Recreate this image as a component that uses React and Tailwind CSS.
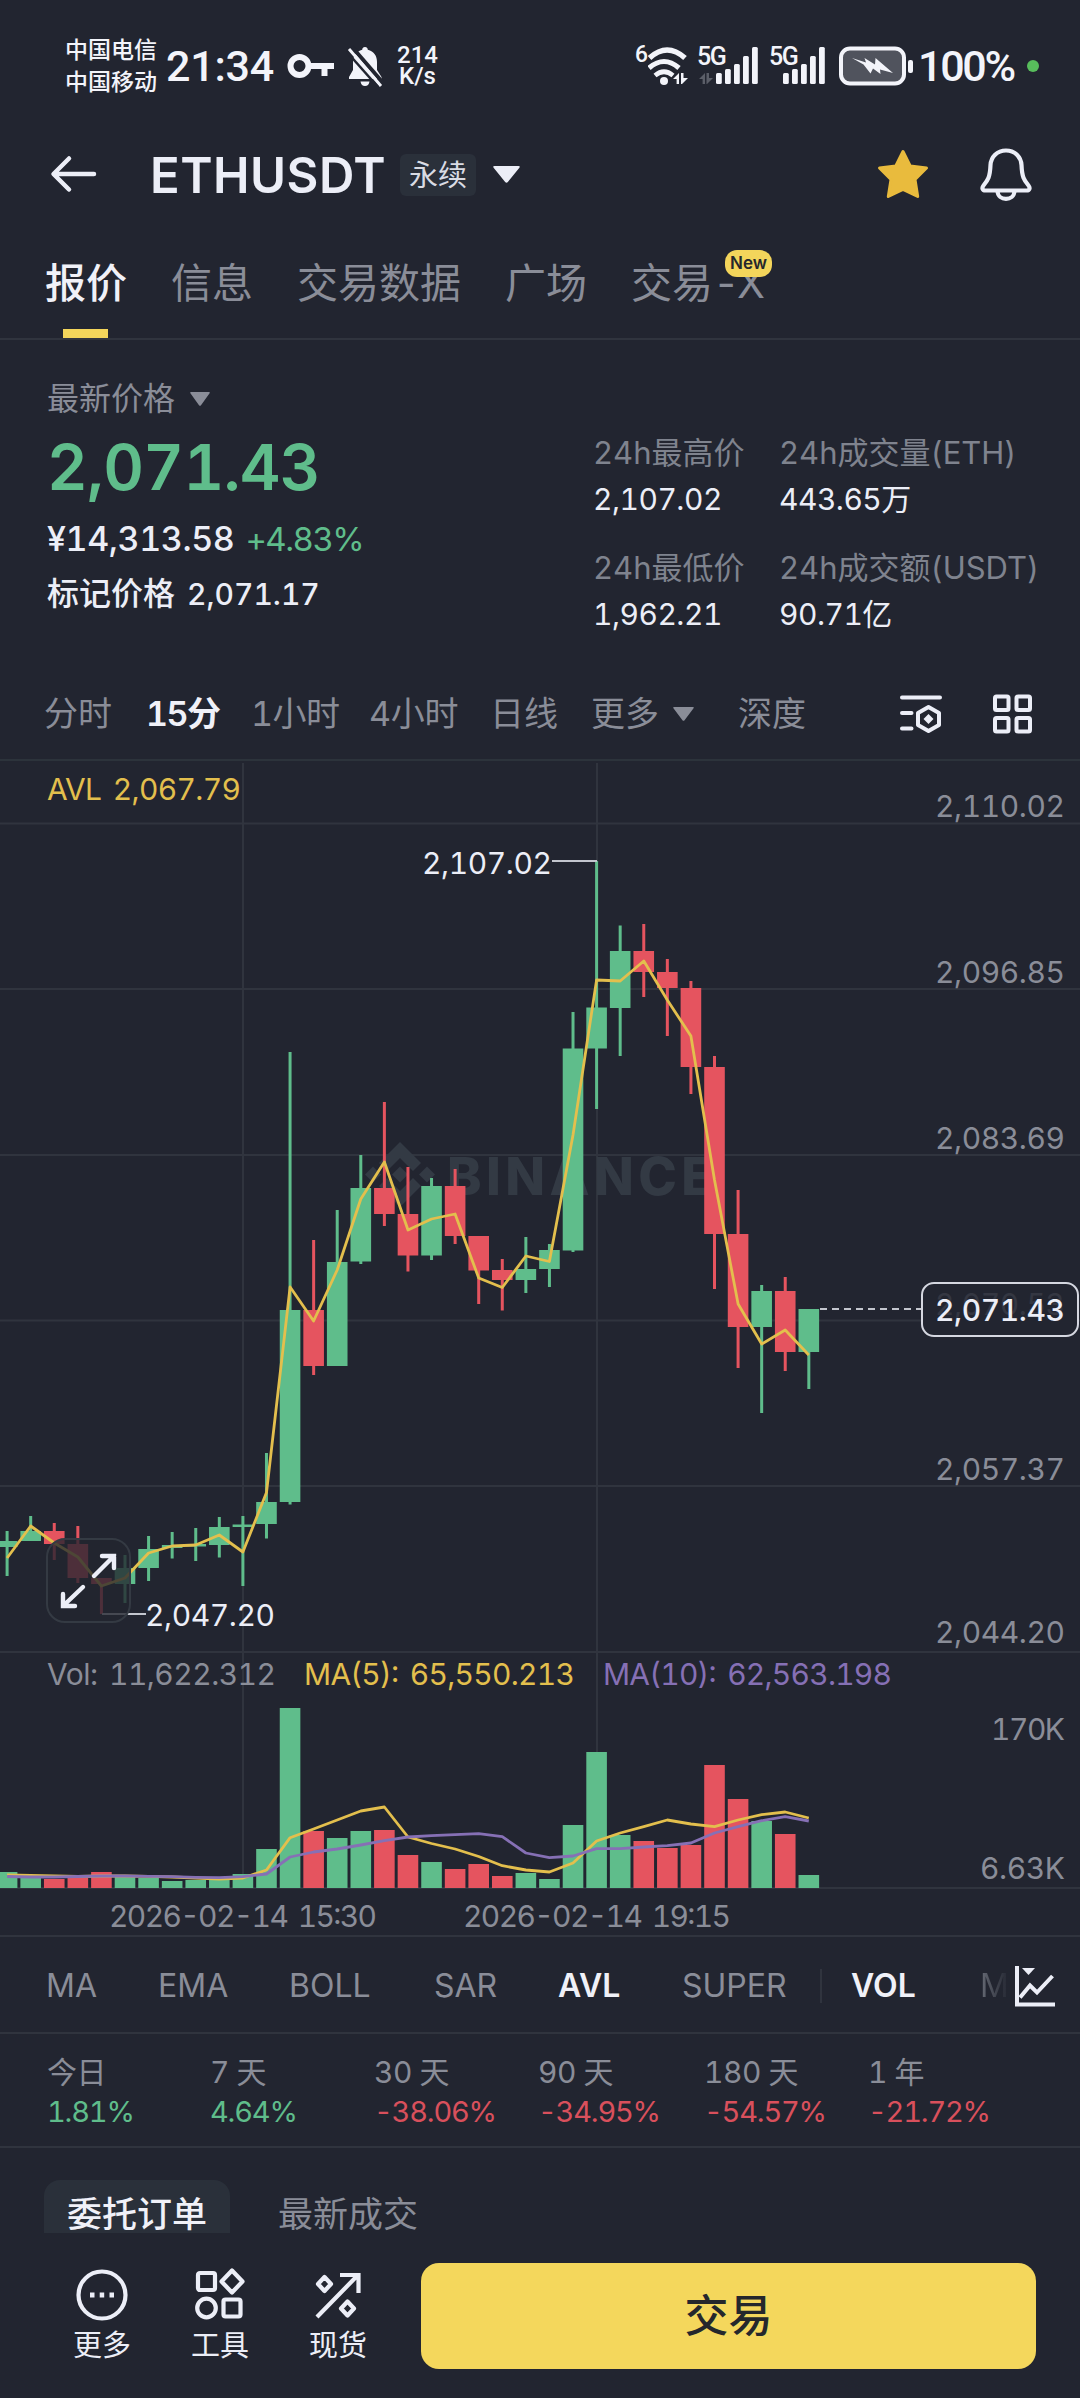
import clsx from "clsx";

const GREEN = "#5fbd8b";
const RED = "#e5545f";
const YELLOW = "#e3bf4d";
const PURPLE = "#8670b5";
const GRAY = "#8a8d98";
const LIGHT = "#eceef7";

// [direction, high, bodyTop, bodyBottom, low, volumeTop, avl, ma5, ma10]
const candles = [
  ["up", 1531, 1541, 1547, 1576, 1872, 1558, 1875, 1876.5],
  ["up", 1516, 1531, 1541, 1541, 1877, 1526, 1875.5, 1877],
  ["down", 1523, 1531, 1544, 1560, 1879, 1543, 1876, 1877],
  ["down", 1526, 1544, 1578, 1583, 1878, 1557, 1876.5, 1876.5],
  ["down", 1578, 1578, 1584, 1614, 1872, 1586, 1876, 1876],
  ["up", 1555, 1568, 1584, 1603, 1877, 1578, 1876, 1876],
  ["up", 1536, 1549, 1568, 1581, 1878, 1553, 1876.3, 1876.3],
  ["up", 1532, 1545, 1548, 1558.5, 1881, 1546, 1877, 1876.7],
  ["up", 1528, 1544, 1546.5, 1561, 1880, 1545, 1878, 1877.3],
  ["up", 1517, 1527, 1545, 1557.5, 1880, 1535, 1879, 1877.7],
  ["up", 1516, 1524.5, 1527, 1586, 1874, 1552, 1878, 1876.7],
  ["up", 1453, 1502, 1524, 1538.5, 1849, 1492.5, 1870, 1874],
  ["up", 1052, 1310, 1502, 1504.5, 1708, 1287, 1837.7, 1857],
  ["down", 1240, 1310, 1366, 1375, 1831, 1321, 1829, 1852],
  ["up", 1210, 1262, 1366, 1366, 1838, 1270, 1820, 1849],
  ["up", 1155, 1188, 1261.5, 1264, 1831, 1199, 1811, 1845],
  ["down", 1102, 1188, 1214, 1226, 1830, 1162, 1807, 1840.7],
  ["down", 1167, 1214, 1255.5, 1271.5, 1855, 1230, 1837, 1837],
  ["up", 1178, 1186, 1255.5, 1260, 1862, 1219, 1843.5, 1835.7],
  ["down", 1169, 1186, 1236, 1244, 1869, 1214, 1849, 1834.7],
  ["down", 1236, 1236, 1270.5, 1304, 1864, 1278, 1856.5, 1833.7],
  ["down", 1259, 1270, 1280, 1310.5, 1876, 1287.5, 1865.7, 1836.7],
  ["up", 1237, 1269, 1280, 1293, 1873, 1256, 1870, 1853],
  ["up", 1244, 1250, 1269, 1287, 1879, 1261.5, 1872, 1857.7],
  ["up", 1012, 1048.5, 1250.5, 1252, 1825, 1135, 1863, 1856],
  ["up", 861, 1007.5, 1048.5, 1109, 1752, 980, 1841, 1848.7],
  ["up", 925.5, 951, 1008, 1056, 1835, 981, 1833, 1848.7],
  ["down", 924, 951, 972, 997, 1841, 961, 1826.7, 1847],
  ["down", 959, 972, 988, 1036, 1848, 1000, 1820, 1845.7],
  ["down", 981, 988, 1067, 1094, 1845, 1036, 1824, 1843],
  ["down", 1056, 1067, 1234, 1289, 1765, 1180, 1826.7, 1833],
  ["down", 1190, 1234, 1327, 1368, 1799, 1304, 1820, 1826.7],
  ["up", 1285, 1291, 1327, 1413, 1821, 1344, 1814.7, 1820.7],
  ["down", 1277, 1291, 1352, 1371, 1834, 1330, 1812, 1816.7],
  ["up", 1309, 1309, 1352, 1389, 1875, 1355, 1818, 1821],
];

const cx = (i) => 7.1 + i * 23.58;
const line = (col) => candles.map((c, i) => `${cx(i).toFixed(1)},${c[col]}`).join(" ");

const tabs = ["报价", "信息", "交易数据", "广场"];

const performance = [
  ["今日", "1.81%"],
  ["7 天", "4.64%"],
  ["30 天", "-38.06%"],
  ["90 天", "-34.95%"],
  ["180 天", "-54.57%"],
  ["1 年", "-21.72%"],
];

function Caret({ className }) {
  return (
    <svg viewBox="0 0 20 13" preserveAspectRatio="none" className={className} fill="currentColor">
      <path d="M1.2 0H18.8Q20.6 0 19.4 1.5L11 12.2Q10 13.4 9 12.2L0.6 1.5Q-0.6 0 1.2 0Z" />
    </svg>
  );
}

function Signal({ arrows }) {
  return (
    <svg width="59" height="40" viewBox="0 0 59 40" fill="#f3f4fa">
      {arrows && (
        <g fill="#5b5e68">
          <path d="M0 33L6 27V38H3.6V33Z" />
          <path d="M7.5 27H10V32H14L8 38H7.5Z" />
        </g>
      )}
      <rect x="17" y="27" width="5.8" height="11" rx="1.5" />
      <rect x="26" y="23" width="5.8" height="15" rx="1.5" />
      <rect x="35" y="18" width="5.8" height="20" rx="1.5" />
      <rect x="44" y="10" width="5.8" height="28" rx="1.5" />
      <rect x="53" y="1" width="5.8" height="37" rx="1.5" />
    </svg>
  );
}

function StatusBar() {
  return (
    <div className="flex h-[132px] items-center pr-[41px] pl-[65px] font-['Roboto','Noto_Sans_CJK_SC',sans-serif] font-medium text-[#f3f4fa]">
      <div className="flex w-[101px] flex-col gap-[9px] text-[23px] leading-[23px]">
        <span>中国电信</span>
        <span>中国移动</span>
      </div>
      <span className="w-[121px] text-[43px] leading-none tracking-[-0.2px]">21:34</span>
      <svg width="48" height="30" viewBox="0 0 48 30" fill="none" stroke="#f3f4fa" strokeWidth="6">
        <circle cx="12.5" cy="15" r="9" />
        <path d="M21 15H47M37.5 15V25" />
      </svg>
      <svg className="ml-[11px]" width="38" height="42" viewBox="0 0 38 42">
        <path
          d="M19 2C20.8 2 21.6 3 21.8 4.8C28 6.3 31 11 31 17V25L35.5 32V34H3V32L7 25V17C7 11 10.5 6.3 16.2 4.8C16.4 3 17.2 2 19 2ZM14.5 36.5H23.5C23 39.5 21.5 41 19 41S15 39.5 14.5 36.5Z"
          fill="#f3f4fa"
        />
        <path d="M6 2L38 39" stroke="#222530" strokeWidth="4" />
        <path d="M3 4L35 41" stroke="#f3f4fa" strokeWidth="3" />
        <path d="M0.5 6.5L32 42" stroke="#222530" strokeWidth="2.5" />
      </svg>
      <div className="ml-[13px] flex flex-col items-center text-[24px] leading-[21px]">
        <span>214</span>
        <span>K/s</span>
      </div>
      <div className="ml-auto flex items-center">
        <span className="mb-[23px] text-[23px] leading-none">6</span>
        <svg width="44" height="40" viewBox="0 0 44 40" fill="none" stroke="#f3f4fa" strokeWidth="4.6">
          <path d="M1.5 12Q19 -4 37 12" strokeWidth="5.4" />
          <path d="M1 22Q16 9 31 22" strokeWidth="5" />
          <path d="M7 29.5Q16 22 25 29.5" />
          <circle cx="16" cy="35" r="4" fill="#f3f4fa" stroke="none" />
          <g fill="#f3f4fa" stroke="none">
            <path d="M25 33L31 27V38H28.6V33Z" />
            <path d="M33 27H35.5V32H40L34 38H33Z" />
          </g>
        </svg>
        <div className="relative ml-[7px]">
          <span className="absolute top-0 left-[-2px] text-[25px] leading-[22px] tracking-[-1.5px]">5G</span>
          <Signal arrows />
        </div>
        <div className="relative ml-[8px]">
          <span className="absolute top-0 left-[3px] text-[25px] leading-[22px] tracking-[-1.5px]">5G</span>
          <Signal />
        </div>
        <svg className="ml-[14px]" width="76" height="40" viewBox="0 0 76 40">
          <rect x="2" y="2.5" width="63" height="35" rx="9" fill="#50535d" stroke="#f3f4fa" strokeWidth="4" />
          <rect x="69" y="14" width="5" height="13" rx="2" fill="#f3f4fa" />
          <path d="M13 12L27 16.5L25.5 12L36 18.5L36.5 12L54 27L41 23.5L41.5 28L34 22.5L31.5 27.5L24.5 18.5Z" fill="#f3f4fa" />
        </svg>
        <span className="ml-[3px] w-[109px] text-[43px] leading-none tracking-[-2.3px]">100%</span>
        <span className="size-[12px] rounded-full bg-[#58bd5c]" />
      </div>
    </div>
  );
}

function Header() {
  return (
    <div className="flex h-[84px] items-center pr-[48px] pl-[48px] text-[#eceef7]">
      <svg width="50" height="40" viewBox="0 0 50 40" fill="none" stroke="currentColor" strokeWidth="4.5" strokeLinecap="round" strokeLinejoin="round">
        <path d="M46 20H6M21 4.5L5.5 20L21 35.5" />
      </svg>
      <h1 className="ml-[52px] w-[250px] pt-[2px] text-[49px] leading-none font-semibold tracking-[0.5px]">ETHUSDT</h1>
      <span className="mt-[1px] rounded-md bg-[#2a303a] px-[9px] pt-[7px] pb-[5px] text-[29px] leading-[30px] text-[#d9dbe4]">永续</span>
      <Caret className="ml-[17px] h-[17px] w-[27px]" />
      <svg className="ml-auto" width="52" height="50" viewBox="0 0 52 50" fill="#e9bb3d" stroke="#e9bb3d" strokeWidth="3" strokeLinejoin="round">
        <path d="M26 2.5L33.2 17L49.5 19L38 30.5L40.7 47.5L26 40.5L11.3 47.5L14 30.5L2.5 19L18.800 17Z" />
      </svg>
      <svg className="ml-[51px]" width="52" height="54" viewBox="0 0 52 54" fill="none" stroke="currentColor" strokeWidth="4.2" strokeLinejoin="round">
        <path d="M26 3.5C35 3.5 41 10 41.5 18C42 30 44 33 48.5 38.5C50.5 41 49.5 43.5 46.5 43.5H5.5C2.5 43.5 1.5 41 3.5 38.5C8 33 10 30 10.5 18C11 10 17 3.5 26 3.5Z" />
        <path d="M17.500 44C18 54.500 34 54.500 34.500 44" />
      </svg>
    </div>
  );
}

function Tabs() {
  return (
    <nav className="flex h-[124px] gap-[44px] border-b-2 border-[#30343e] pl-[45px] text-[41px] leading-none text-[#8a8d98]">
      {tabs.map((t, i) => (
        <div key={t} className={clsx("relative flex items-center pt-[12px]", i === 0 && "font-medium text-[#f0f1f8]")}>
          {t}
          {i === 0 && <span className="absolute bottom-0 left-[18px] h-[9px] w-[45px] bg-[#f3d55b]" />}
        </div>
      ))}
      <div className="relative flex items-center pt-[12px]">
        交易<span className="tracking-[-2.5px]">-X</span>
        <span className="absolute top-[34px] left-[94px] flex h-[27px] w-[47px] items-center justify-center rounded-[12px] bg-[#f3d55b] text-[17px] font-semibold text-[#25272c]">
          New
        </span>
      </div>
    </nav>
  );
}

function Stat({ label, value }) {
  return (
    <div className="text-[31px] leading-none whitespace-nowrap">
      <div className="flex h-[44px] items-center text-[#7f838e]">{label}</div>
      <div className="flex h-[50px] items-center text-[30px] tracking-[-0.5px]">{value}</div>
    </div>
  );
}

function Quote() {
  return (
    <section className="flex h-[328px] justify-between pl-[47px] leading-none text-[#eceef7]">
      <div className="pt-[41px]">
        <div className="flex h-[36px] items-center text-[32px] text-[#8a8d98]">
          最新价格
          <Caret className="ml-[15px] h-[14px] w-[20px]" />
        </div>
        <div className="flex h-[100px] items-center text-[63px] font-semibold tracking-[-0.7px] text-[#5fbd8b]">2,071.43</div>
        <div className="flex h-[44px] items-center gap-[11px] text-[34px]">
          <span className="font-medium tracking-[-0.4px]">¥14,313.58</span>
          <span className="text-[33px] tracking-[-1.5px] text-[#5fbd8b]">+4.83%</span>
        </div>
        <div className="flex h-[66px] items-center gap-[12px] text-[32px] font-medium">
          标记价格
          <span className="text-[30px]">2,071.17</span>
        </div>
      </div>
      <div className="grid w-[487px] grid-cols-[186px_1fr] content-start gap-y-[21px] pt-[90px]">
        <Stat label="24h最高价" value="2,107.02" />
        <Stat label="24h成交量(ETH)" value="443.65万" />
        <Stat label="24h最低价" value="1,962.21" />
        <Stat label="24h成交额(USDT)" value="90.71亿" />
      </div>
    </section>
  );
}

function Timeframes() {
  return (
    <div className="flex h-[93px] items-center border-b-2 border-[#2c333b] pt-[1px] pr-[47px] pl-[44px] text-[34px] leading-none text-[#8a8d98]">
      <span className="w-[102px]">分时</span>
      <span className="w-[105px] font-semibold tracking-[-1.5px] text-[#f0f1f8]">15分</span>
      <span className="w-[118px] tracking-[-0.5px]">1小时</span>
      <span className="w-[121px] tracking-[-0.3px]">4小时</span>
      <span className="w-[101px]">日线</span>
      <span>更多</span>
      <Caret className="ml-[14px] h-[14px] w-[21px]" />
      <span className="ml-[44px]">深度</span>
      <svg className="ml-auto" width="42" height="40" viewBox="0 0 42 40" fill="none" stroke="#eceef7" strokeWidth="4">
        <path d="M2 3.5H40M2 19H11.5M2 34.5H11.5" strokeLinecap="round" />
        <path d="M28.5 13L39 19V31L28.5 37L18 31V19Z" strokeLinejoin="round" />
        <path d="M28.5 20L33.5 25L28.5 30L23.5 25Z" fill="#eceef7" stroke="none" />
      </svg>
      <svg className="ml-[50px]" width="41" height="40" viewBox="0 0 41 40" fill="none" stroke="#eceef7" strokeWidth="4">
        <rect x="3" y="2.5" width="13.5" height="13.5" rx="1.5" />
        <rect x="24.5" y="2.5" width="13.5" height="13.5" rx="1.5" />
        <rect x="3" y="24" width="13.5" height="13.5" rx="1.5" />
        <rect x="24.5" y="24" width="13.5" height="13.5" rx="1.5" />
      </svg>
    </div>
  );
}

function Label({ x, y, w, color, children, weight }) {
  return (
    <text x={x} y={y + 11} textLength={w} fill={color} fontSize="30" fontWeight={weight} wordSpacing="4">
      {children}
    </text>
  );
}

function Chart() {
  return (
    <svg className="block h-[1174px] w-[1080px]" viewBox="0 761 1080 1174">
      {/* grid */}
      <g stroke="#30343e" strokeWidth="2">
        {[823.5, 989, 1155, 1320.5, 1486, 1652, 1888].map((y) => (
          <path key={y} d={`M0 ${y}H1080`} />
        ))}
        <path d="M243 763V1888M597 763V1888" />
      </g>

      {/* watermark */}
      <g fill="#333a44">
        <path d="M400 1142L421 1163L413 1171L400 1158L387 1171L379 1163Z" />
        <path d="M400 1207L379 1186L387 1178L400 1191L413 1178L421 1186Z" />
        <path d="M400 1166.5L408 1174.5L400 1182.5L392 1174.5Z" />
        <path d="M373 1166.5L381 1174.5L373 1182.5L365 1174.5Z" />
        <path d="M427 1166.5L435 1174.5L427 1182.5L419 1174.5Z" />
        <text x="447" y="1195" fontSize="52" fontWeight="800" textLength="266">
          BINANCE
        </text>
      </g>

      {/* candles and volume */}
      {candles.map(([dir, high, top, bottom, low, vol], i) => {
        const color = dir === "up" ? GREEN : RED;
        return (
          <g key={i} fill={color}>
            <rect x={cx(i) - 1.5} y={high} width="3" height={low - high} />
            <rect x={cx(i) - 10.3} y={top} width="20.6" height={bottom - top} />
            <rect x={cx(i) - 10.3} y={vol} width="20.6" height={1888 - vol} />
          </g>
        );
      })}
      <g fill="none" strokeWidth="2.8" strokeLinejoin="round">
        <polyline points={line(6)} stroke={YELLOW} />
        <polyline points={line(7)} stroke={YELLOW} />
        <polyline points={line(8)} stroke={PURPLE} />
      </g>

      {/* high and low markers */}
      <path d="M552 861H597M102 1614H146" stroke="#c3c6ce" strokeWidth="2" />
      <Label x="422" y={863} w="130" color={LIGHT}>2,107.02</Label>
      <Label x="145" y={1615} w="130" color={LIGHT}>2,047.20</Label>

      {/* expand button */}
      <rect x="47" y="1539" width="83" height="83" rx="18" fill="#222530" fillOpacity="0.78" stroke="#343a43" strokeWidth="2" />
      <path
        d="M94 1576L114 1556M102 1556H114V1568M83 1587L63 1606M63 1594V1606H75"
        fill="none"
        stroke={LIGHT}
        strokeWidth="4.400"
        strokeLinecap="round"
      />

      {/* axis labels */}
      <Label x="47" y={789} w="194" color={YELLOW}>AVL 2,067.79</Label>
      <Label x="935" y={806} w="130" color={GRAY}>2,110.02</Label>
      <Label x="935" y={972} w="130" color={GRAY}>2,096.85</Label>
      <Label x="935" y={1138} w="130" color={GRAY}>2,083.69</Label>
      <Label x="935" y={1469} w="130" color={GRAY}>2,057.37</Label>
      <Label x="935" y={1632} w="130" color={GRAY}>2,044.20</Label>
      <Label x="991" y={1729} w="74" color={GRAY}>170K</Label>
      <Label x="980" y={1868} w="85" color={GRAY}>6.63K</Label>
      <Label x="47" y={1674} w="229" color={GRAY}>Vol: 11,622.312</Label>
      <Label x="304" y={1674} w="271" color={YELLOW}>MA(5): 65,550.213</Label>
      <Label x="603" y={1674} w="289" color={PURPLE}>MA(10): 62,563.198</Label>
      <Label x="109" y={1916} w="268" color={GRAY}>2026-02-14 15:30</Label>
      <Label x="463" y={1916} w="268" color={GRAY}>2026-02-14 19:15</Label>

      {/* last price tag */}
      <path d="M820 1309H921" stroke="#c3c6ce" strokeWidth="2" strokeDasharray="7 5" />
      <rect x="922" y="1283" width="156" height="53" rx="12" fill="#222530" stroke="#d5d7e0" strokeWidth="2" />
      <Label x="935" y={1304} w="130" color="#343742">2,070.53</Label>
      <Label x="935" y={1310} w="130" color={LIGHT} weight="500">2,071.43</Label>
    </svg>
  );
}

function Indicators() {
  return (
    <div className="flex h-[99px] items-center border-y-2 border-[#30343e] pt-[2px] pl-[46px] text-[32px] leading-none text-[#8a8d98]">
      <span className="w-[112px]">MA</span>
      <span className="w-[131px]">EMA</span>
      <span className="w-[145px]">BOLL</span>
      <span className="w-[124px]">SAR</span>
      <span className="w-[124px] font-semibold text-[#f0f1f8]">AVL</span>
      <span className="w-[138px]">SUPER</span>
      <span className="h-[34px] w-[2px] bg-[#30343e]" />
      <span className="ml-[29px] w-[129px] font-semibold text-[#f0f1f8]">VOL</span>
      <span className="w-[26px] bg-linear-to-r from-[#686c76] to-[#2a2d38] bg-clip-text text-transparent">M</span>
      <svg className="ml-[8px]" width="42" height="44" viewBox="0 0 42 44" fill="none" stroke="#eceef7" strokeWidth="4">
        <path d="M3 2V40.5H41" />
        <path d="M6 33.5L16 21.5L23 28.5L38.5 12" />
        <path d="M8 4H21L14.5 11Z" fill="#eceef7" stroke="none" />
      </svg>
    </div>
  );
}

function Performance() {
  return (
    <div className="grid h-[114px] grid-cols-[163px_164px_164px_166px_164px_1fr] border-b-2 border-[#30343e] pt-[17px] pl-[47px] text-[30px] leading-none">
      {performance.map(([label, value]) => (
        <div key={label}>
          <div className="flex h-[42px] items-center tracking-[-0.5px] text-[#8a8d98]">{label}</div>
          <div
            className={clsx(
              "flex h-[36px] items-center text-[29px] tracking-[-1.2px]",
              value.startsWith("-") ? "text-[#d9505c]" : "text-[#5fbd8b]"
            )}
          >
            {value}
          </div>
        </div>
      ))}
    </div>
  );
}

function Action({ label, children }) {
  return (
    <div className="flex w-[118px] flex-col items-center gap-[9px] text-[29px] leading-[30px]">
      <svg width="54" height="54" viewBox="0 0 54 54" fill="none" stroke="#eceef7" strokeWidth="4.2">
        {children}
      </svg>
      {label}
    </div>
  );
}

function Footer() {
  return (
    <footer className="flex h-[165px] pl-[43px] text-[#eceef7]">
      <div className="flex pt-[35px]">
        <Action label="更多">
          <circle cx="27" cy="27" r="23.5" />
          <path d="M15 27H19.5M24.7 27H29.2M34.5 27H39" strokeWidth="5" />
        </Action>
        <Action label="工具">
          <rect x="5" y="5" width="17" height="17" rx="2" />
          <path d="M39 2.5L49.5 13.5L39 24.5L28.5 13.5Z" strokeLinejoin="round" />
          <circle cx="13.5" cy="40" r="9.3" />
          <rect x="30.5" y="31.5" width="17" height="17" rx="2" />
        </Action>
        <Action label="现货">
          <path d="M6 49L47 7M29 7H47.5V25" />
          <path d="M13.5 9L20 16L13.5 23L7 16ZM36.5 33.5L43 40.5L36.5 47.5L30 40.5Z" strokeLinejoin="round" />
        </Action>
      </div>
      <button className="mt-[30px] ml-[24px] h-[106px] w-[615px] rounded-[18px] bg-[#f4d75c] text-[44px] font-medium text-[#25272c]">
        交易
      </button>
    </footer>
  );
}

export default function App() {
  return (
    <main className="h-[2398px] w-[1080px] overflow-hidden bg-[#222530] font-['Inter','Noto_Sans_CJK_SC',sans-serif] tabular-nums">
      <StatusBar />
      <Header />
      <Tabs />
      <Quote />
      <Timeframes />
      <Chart />
      <Indicators />
      <Performance />
      <div className="flex h-[85px] items-end pl-[44px] text-[35px] leading-none text-[#8a8d98]">
        <span className="flex h-[53px] w-[186px] justify-center rounded-t-[16px] bg-[#2a303a] pt-[17px] font-medium text-[#f0f1f8]">
          委托订单
        </span>
        <span className="ml-[48px] h-[36px]">最新成交</span>
      </div>
      <Footer />
    </main>
  );
}
